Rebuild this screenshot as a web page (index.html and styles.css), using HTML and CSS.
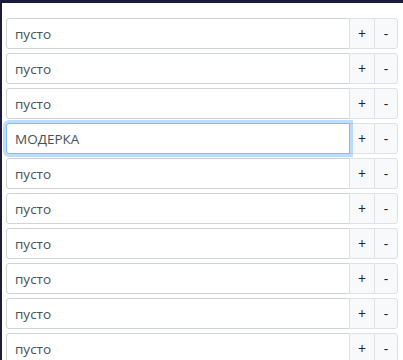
FILE: index.html
```html
<!DOCTYPE html>
<html lang="ru">
<head>
    <meta charset="UTF-8">
    <meta name="viewport" content="width=device-width, initial-scale=1.0">
    <title>Слоты</title>
    <link rel="stylesheet" href="styles.css">
</head>
<body>

    <div class="panel">
        <div id="slots" class="slots"></div>
    </div>

    <script>
        const values = ['пусто', 'пусто', 'пусто', 'МОДЕРКА', 'пусто', 'пусто', 'пусто', 'пусто', 'пусто', 'пусто'];
        const slots = document.getElementById('slots');

        values.forEach((value, index) => {
            let row = document.createElement('div');
            row.classList.add('slot');
            row.innerHTML = `
                <input class="slot-input" type="text" value="${value}">
                <button class="slot-btn">+</button>
                <button class="slot-btn slot-btn-last">-</button>
            `;
            slots.appendChild(row);
        });

        // active slot
        const active = slots.querySelectorAll('.slot-input')[3];
        active.classList.add('is-active');
        active.focus();
        active.setSelectionRange(active.value.length, active.value.length);
    </script>

</body>
</html>
```

FILE: styles.css
```css
body {
    margin: 0;
    background-color: #1c1b3b;
    font-family: 'Open Sans', 'Noto Sans', sans-serif;
    height: 100vh;
    overflow: hidden;
}

.panel {
    margin: 3px 0 0 2px;
    background-color: #ffffff;
    height: 100%;
    padding: 15px 5px 0 4px;
    box-sizing: border-box;
}

.slots {
    display: flex;
    flex-direction: column;
    gap: 4px;
}

.slot {
    display: flex;
    height: 31px;
}

.slot-input {
    flex: 1;
    min-width: 0;
    margin: 0;
    height: 31px;
    box-sizing: border-box;
    padding: 4px 8px;
    font-family: inherit;
    font-size: 13.5px;
    color: #495057;
    background-color: #ffffff;
    border: 1px solid #ced4da;
    border-radius: 3px 0 0 3px;
    outline: none;
    caret-color: #212529;
}

.slot-input.is-active,
.slot-input:focus {
    position: relative;
    z-index: 2;
    border-color: #80bdff;
    box-shadow: 0 0 0 3px rgba(0, 123, 255, 0.25);
}

.slot-btn {
    margin: 0 0 0 -1px;
    padding: 0 8px;
    min-width: 24px;
    height: 31px;
    font-family: inherit;
    font-size: 14px;
    color: #212529;
    background-color: #f8f9fa;
    border: 1px solid #dee2e6;
    border-radius: 0;
    cursor: pointer;
}

.slot-btn-last {
    border-radius: 0 3px 3px 0;
}
```
